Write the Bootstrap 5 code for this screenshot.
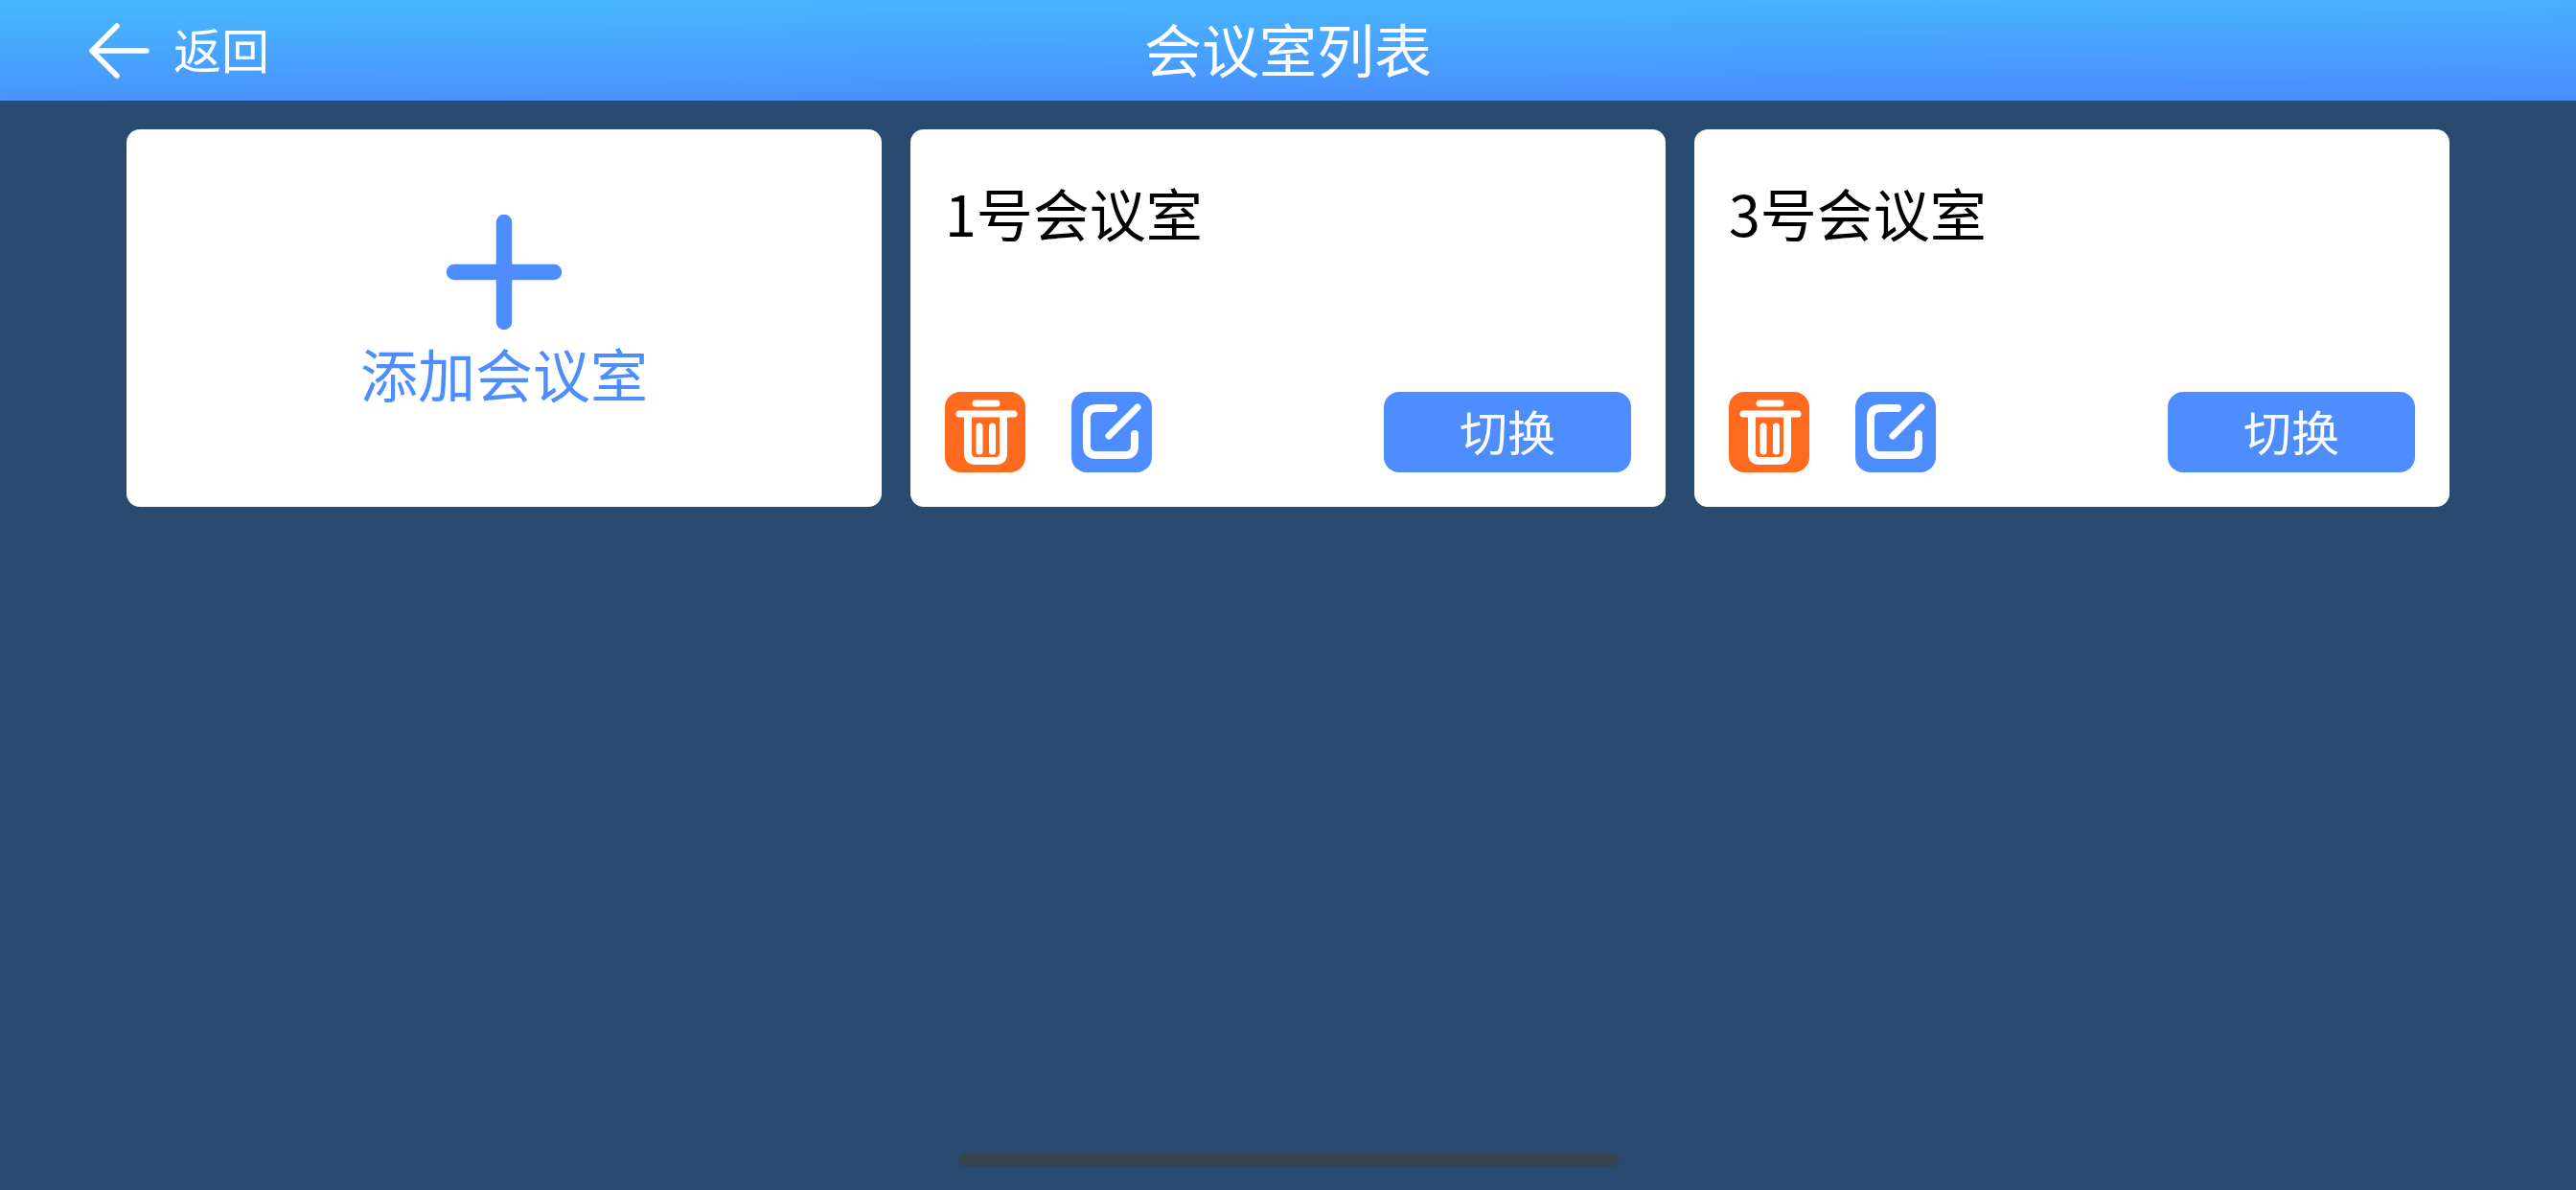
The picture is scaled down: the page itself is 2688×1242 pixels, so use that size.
<!DOCTYPE html>
<html lang="zh-CN">
<head>
  <meta charset="UTF-8" />
  <meta name="viewport" content="width=device-width, initial-scale=1" />
  <title>会议室列表</title>
  <link href="https://cdn.jsdelivr.net/npm/bootstrap@5.3.0/dist/css/bootstrap.min.css" rel="stylesheet" />
  <style>
    body { background: #294b70; font-family: "Noto Sans CJK SC", "Liberation Sans", sans-serif; font-weight: 400; }
    .pagina { height: 1242px; }
    .cabecera { height: 105px; padding-left: 92px; background: linear-gradient(179.5deg, #47b9fd, #4a8bff); }
    .cabecera .flecha { width: 64px; height: 58px; }
    .volver { font-size: 50px; line-height: 1; margin-left: 25px; margin-top: -5px; }
    .titulo { font-size: 60px; line-height: 1; padding-bottom: 7px; }
    .lista-salas { display: grid; grid-template-columns: repeat(3, 788px); gap: 30px; padding: 30px 132px 0; }
    .sala { height: 394px; border-radius: 14px; padding: 36px; background: #fff; }
    .sala-nueva { color: #4d8dff; font-size: 60px; line-height: 1; }
    .icono-mas { margin-top: 53px; }
    .texto-nuevo { margin-top: 15px; }
    .sala-nombre { font-size: 59px; line-height: 1; color: #000; margin-top: 21px; }
    .cuadro { width: 84px; height: 84px; border-radius: 16px; }
    .cuadro-borrar { background: #ff6a1f; margin-right: 48px; }
    .cuadro-editar { background: #4d8dff; }
    .btn-cambiar { width: 258px; height: 84px; border: 0; border-radius: 16px; padding: 0 0 4px; background: #4d8dff; color: #fff; font-size: 50px; font-weight: 400; line-height: 1; }
    .btn-cambiar:hover { background: #4d8dff; color: #fff; }
    .barra-inicio { width: 689px; height: 15px; margin-bottom: 24px; border-radius: 8px; background: #36444f; }
  </style>
</head>
<body>
  <div class="pagina d-flex flex-column">
    <header class="cabecera position-relative d-flex align-items-center text-white">
      <svg class="flecha" viewBox="0 0 64 58" fill="none" stroke="#fff" stroke-width="5.5" stroke-linecap="round" stroke-linejoin="round"><path d="M30 3 4 29l26 26M4 29h57"/></svg>
      <span class="volver">返回</span>
      <div class="titulo position-absolute top-50 start-50 translate-middle">会议室列表</div>
    </header>

    <main class="lista-salas">
      <div class="sala sala-nueva d-flex flex-column align-items-center">
        <svg width="120" height="120" viewBox="0 0 120 120" class="icono-mas flex-shrink-0" fill="none" stroke="#4d8dff" stroke-width="16.5" stroke-linecap="round"><path d="M60 8v104M8 60h104"/></svg>
        <div class="texto-nuevo">添加会议室</div>
      </div>

      <div class="sala d-flex flex-column">
        <div class="sala-nombre">1号会议室</div>
        <div class="d-flex align-items-center mt-auto">
          <span class="cuadro cuadro-borrar d-block">
            <svg width="84" height="84" viewBox="0 0 84 84" fill="none" stroke="#fff" stroke-linecap="round" stroke-linejoin="round"><path stroke-width="7" d="M32 12h22M15 23h57"/><path stroke-width="8" d="M24 26v38q0 8 8 8h21q8 0 8-8V26"/><path stroke-width="7" d="M36 36v26M49.5 36v26"/></svg>
          </span>
          <span class="cuadro cuadro-editar d-block">
            <svg width="84" height="84" viewBox="0 0 84 84" fill="none" stroke="#fff" stroke-linecap="round" stroke-linejoin="round"><path stroke-width="8" d="M44 17H26q-10 0-10 10v29q0 10 10 10h30q10 0 10-10V44"/><path stroke-width="7" d="M39 46 69 16"/></svg>
          </span>
          <button type="button" class="btn btn-cambiar ms-auto">切换</button>
        </div>
      </div>

      <div class="sala d-flex flex-column">
        <div class="sala-nombre">3号会议室</div>
        <div class="d-flex align-items-center mt-auto">
          <span class="cuadro cuadro-borrar d-block">
            <svg width="84" height="84" viewBox="0 0 84 84" fill="none" stroke="#fff" stroke-linecap="round" stroke-linejoin="round"><path stroke-width="7" d="M32 12h22M15 23h57"/><path stroke-width="8" d="M24 26v38q0 8 8 8h21q8 0 8-8V26"/><path stroke-width="7" d="M36 36v26M49.5 36v26"/></svg>
          </span>
          <span class="cuadro cuadro-editar d-block">
            <svg width="84" height="84" viewBox="0 0 84 84" fill="none" stroke="#fff" stroke-linecap="round" stroke-linejoin="round"><path stroke-width="8" d="M44 17H26q-10 0-10 10v29q0 10 10 10h30q10 0 10-10V44"/><path stroke-width="7" d="M39 46 69 16"/></svg>
          </span>
          <button type="button" class="btn btn-cambiar ms-auto">切换</button>
        </div>
      </div>
    </main>

    <div class="barra-inicio mt-auto mx-auto"></div>
  </div>

  <script src="https://cdn.jsdelivr.net/npm/bootstrap@5.3.0/dist/js/bootstrap.bundle.min.js"></script>
</body>
</html>
